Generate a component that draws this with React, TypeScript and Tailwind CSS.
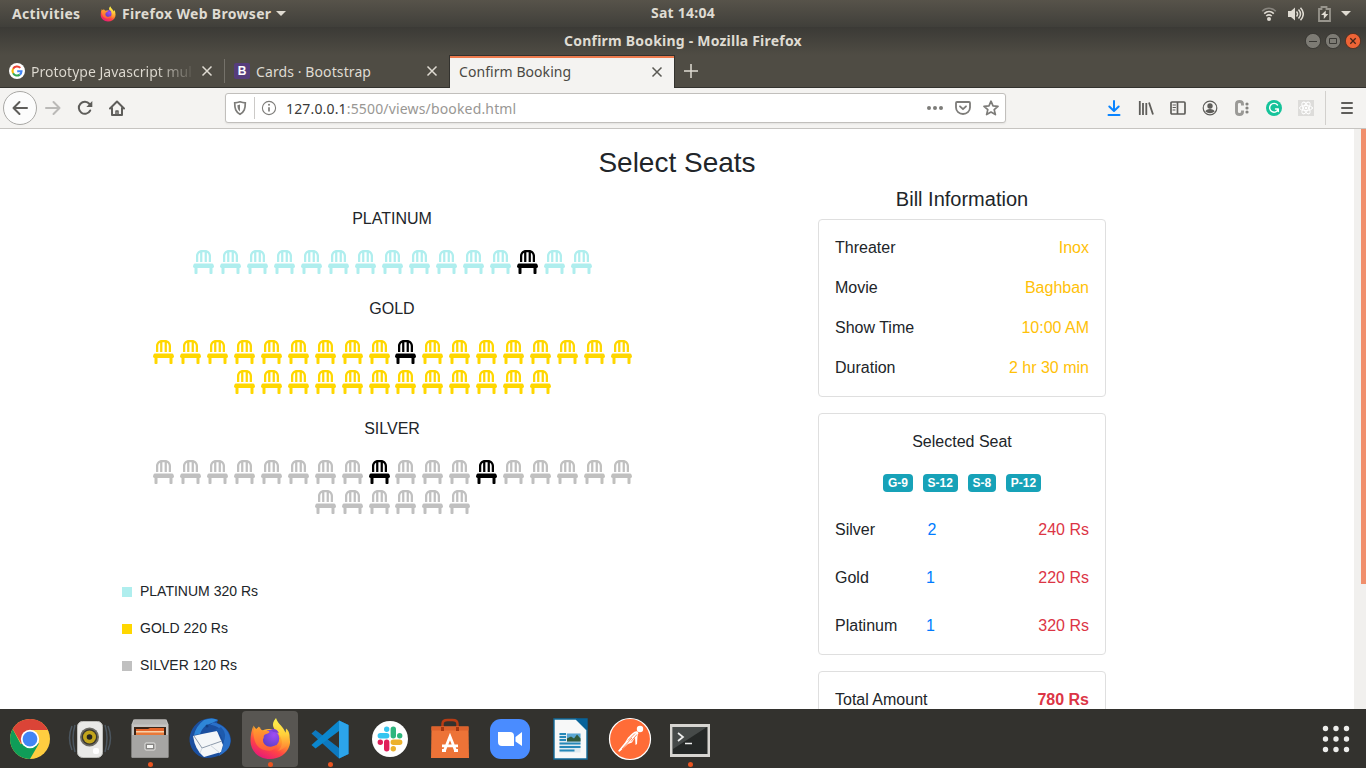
import type { ReactNode } from "react";
import { FaChair } from "react-icons/fa";

const chromeFont = "font-['Noto_Sans','Open_Sans',sans-serif]";

function FirefoxLogo({ id, className }: { id: string; className: string }) {
  return (
    <svg viewBox="0 0 48 48" className={className}>
      <defs>
        <linearGradient id={id + "a"} x1="0.85" y1="0.1" x2="0.3" y2="1">
          <stop offset="0" stopColor="#ffe03c" />
          <stop offset="0.35" stopColor="#ff9a2c" />
          <stop offset="0.65" stopColor="#ff4545" />
          <stop offset="1" stopColor="#e5187a" />
        </linearGradient>
        <radialGradient id={id + "b"} cx="0.7" cy="0.3" r="0.8">
          <stop offset="0" stopColor="#a04cf5" />
          <stop offset="1" stopColor="#5b3fc4" />
        </radialGradient>
        <linearGradient id={id + "c"} x1="0" y1="0" x2="0" y2="1">
          <stop offset="0" stopColor="#fff44f" />
          <stop offset="0.5" stopColor="#ffd03a" />
          <stop offset="1" stopColor="#ff7a35" />
        </linearGradient>
        <linearGradient id={id + "d"} x1="0" y1="0" x2="0" y2="1">
          <stop offset="0" stopColor="#ffa62b" />
          <stop offset="1" stopColor="#ff5a3c" />
        </linearGradient>
      </defs>
      <path d="M7.500 10.500c-.5 2 0 3.500.5 5.500l5-4.500c.4 2 1.500 3.500 3.500 4 5-2 12-2 17 1l5 0c5 4 6.500 9 5 14C41 39 33 44 24 44 13 44 4.500 36 4.500 26c0-6 1-11 3-15.500z" fill={`url(#${id}a)`} />
      <path d="M30 3c-6 7-2 11 2.500 16 5 6 4.500 12-.5 17 9-3 12.500-9 11.500-16-.3-3-1.500-5-3.500-6.500l-.5 5C38 11 32 10 30 3z" fill={`url(#${id}c)`} />
      <circle cx="24.500" cy="23.500" r="8.800" fill={`url(#${id}b)`} />
      <path d="M7.500 10.500c1 2 2.500 3.500 4.500 4 .3-1.200 1-2 2-2.500 0 2 1.500 3.300 4 4h4.500c1 .4 1.200 1.300.5 1.800-1.500 1-4 1.200-5 2.700-.6 1 .3 2-1 3.500-.5 5.500 4 8.500 9 7.500 2.500-.5 4-1.500 5.500-1.500-2 5-8 7-13 5-8-2-12-9-11-24.500z" fill={`url(#${id}d)`} />
      <path d="M24.500 15c3-2 7-1 8.500 3.500-2-1-3.500-1.500-5.500-1.500z" fill="#7a3fd8" />
    </svg>
  );
}

function GoogleLogo() {
  return (
    <svg viewBox="0 0 16 16" className="size-4 shrink-0" fill="none" strokeWidth="2.100">
      <circle cx="8" cy="8" r="8" fill="#fff" />
      <path d="M11.300 4.900A4.500 4.500 0 0 0 4.100 5.800" stroke="#ea4335" />
      <path d="M4.100 5.800a4.500 4.500 0 0 0 0 4.400" stroke="#fbbc05" />
      <path d="M4.100 10.200a4.500 4.500 0 0 0 6.700 1.400" stroke="#34a853" />
      <path d="M10.800 11.600A4.500 4.500 0 0 0 12.500 8.200H8.200" stroke="#4285f4" />
    </svg>
  );
}

function Cross({ className }: { className: string }) {
  return (
    <svg viewBox="0 0 12 12" className={"size-3 shrink-0 " + className} stroke="currentColor" strokeWidth="1.500">
      <path d="M1.500 1.500l9 9M10.500 1.500l-9 9" />
    </svg>
  );
}

function SystemBar() {
  return (
    <div className="grid h-[27px] grid-cols-[1fr_auto_1fr] items-center bg-linear-to-b from-[#57534a] to-[#403f3a] text-[14px] font-bold text-[#dfdbd2]">
      <div className="flex items-center">
        <span className="ml-3 w-[87px] tracking-[0.350px] whitespace-nowrap">Activities</span>
        <FirefoxLogo id="top" className="size-[18px]" />
        <span className="ml-[5px] tracking-[0.320px] whitespace-nowrap">Firefox Web Browser</span>
        <svg viewBox="0 0 10 6" className="ml-[5px] h-[6px] w-[10px] fill-[#dfdbd2]">
          <path d="M0 0h10L5 5z" />
        </svg>
      </div>
      <span className="relative -top-px tracking-[0.250px]">Sat 14:04</span>
      <div className="flex items-center justify-end pr-[15px]">
        <svg viewBox="0 0 16 16" className="mr-[11px] size-4" fill="none" stroke="#dfdbd2" strokeWidth="1.600">
          <path d="M1.200 5.200C5 1.300 11 1.300 14.800 5.200" stroke="#88857e" />
          <path d="M3.200 7.600c2.800-2.700 6.800-2.700 9.600 0M5.200 10c1.800-1.500 3.800-1.500 5.600 0" />
          <circle cx="8" cy="13" r="2" fill="#dfdbd2" stroke="none" />
        </svg>
        <svg viewBox="0 0 16 16" className="mr-[13px] size-4" fill="none" stroke="#dfdbd2" strokeWidth="1.500">
          <path d="M0 5h3l4-3.500v13L3 11H0z" fill="#dfdbd2" stroke="none" />
          <path d="M8.500 5.500c1.300 1.500 1.300 3.500 0 5M10.500 3.500c2.500 2.800 2.500 6.200 0 9M12.500 1.800c3.600 4 3.600 8.400 0 12.400" />
        </svg>
        <svg viewBox="0 0 14 16" className="mr-[10px] h-4 w-[14px]" fill="none">
          <path d="M4.500 3V1h5v2H13v12H2V3z" stroke="#98958d" strokeWidth="1.800" />
          <path d="M8.800 4.500L4 9h2.800v4L11.300 8H8.700z" fill="#dfdbd2" />
        </svg>
        <svg viewBox="0 0 10 6" className="h-[6px] w-[10px] fill-[#dfdbd2]">
          <path d="M0 0h10L5 5z" />
        </svg>
      </div>
    </div>
  );
}

function TitleBar() {
  return (
    <div className="grid h-[28px] grid-cols-[1fr_auto_1fr] items-center bg-linear-to-b from-[#3b3a36] to-[#4f4c44] text-[14px] font-bold text-[#dfdbd2]">
      <div />
      <span className="pb-px tracking-[0.210px]">Confirm Booking - Mozilla Firefox</span>
      <div className="flex justify-end gap-1 pr-[5px]">
        <svg viewBox="0 0 16 16" className="size-4">
          <circle cx="8" cy="8" r="7.600" fill="#7d7b74" stroke="#33322e" strokeWidth=".8" />
          <path d="M4 8.500h8" stroke="#3a3935" />
        </svg>
        <svg viewBox="0 0 16 16" className="size-4">
          <circle cx="8" cy="8" r="7.600" fill="#7d7b74" stroke="#33322e" strokeWidth=".8" />
          <path d="M4.500 5.500h7v5h-7z" stroke="#3a3935" fill="none" />
        </svg>
        <svg viewBox="0 0 16 16" className="size-4">
          <circle cx="8" cy="8" r="7.600" fill="#ee6436" stroke="#4a2c20" strokeWidth=".8" />
          <path d="M5.300 5.300l5.400 5.400M10.700 5.300l-5.400 5.400" stroke="#44251a" strokeWidth="1.300" />
        </svg>
      </div>
    </div>
  );
}

function TabStrip() {
  return (
    <div className="flex h-[33px] border-b border-[#33322e] bg-[#4f4c44] text-[14px] text-[#dfdbd2]">
      <div className="flex w-[225px] items-center pl-[9px]">
        <GoogleLogo />
        <div className="ml-[6px] w-[163px] bg-linear-to-r from-[#dfdbd2] from-77% to-[#57544c] bg-clip-text tracking-[0.020px] whitespace-nowrap text-transparent">Prototype Javascript mul</div>
        <Cross className="ml-[7px]" />
        <div className="ml-auto h-6 w-px bg-[#75726a]" />
      </div>
      <div className="flex w-[224px] items-center pr-[11px] pl-[9px]">
        <div className="flex size-4 shrink-0 items-center justify-center rounded-[2px] bg-[#563d7c] font-['Liberation_Sans',sans-serif] text-[12px] font-bold text-white">B</div>
        <span className="ml-[6px] tracking-[0.100px] whitespace-nowrap">Cards · Bootstrap</span>
        <Cross className="ml-auto" />
      </div>
      <div className="-mb-px flex w-[226px] items-center border-x border-t-[1px] border-[#33322e] bg-[#f4f3f1] pr-[11px] pl-[9px] text-[#4a4944] shadow-[inset_0_2px_0_#ee7b4e]">
        <span className="pb-[2px] tracking-[0.060px]">Confirm Booking</span>
        <Cross className="ml-auto text-[#5a5954]" />
      </div>
      <svg viewBox="0 0 14 14" className="mt-[9px] ml-[9px] size-[14px]" stroke="#dfdbd2" strokeWidth="1.500">
        <path d="M7 0v14M0 7h14" />
      </svg>
    </div>
  );
}

function Tool({ children }: { children: ReactNode }) {
  return (
    <div className="flex w-8 items-center justify-center">
      <svg viewBox="0 0 16 16" className="size-4" fill="none" stroke="#5e5d5a" strokeWidth="2" strokeLinecap="round" strokeLinejoin="round">
        {children}
      </svg>
    </div>
  );
}

function Toolbar() {
  return (
    <div className="flex h-[41px] items-stretch border-b border-[#c6c4c1] bg-[#f4f3f1]">
      <div className="flex w-[225px] items-stretch pl-[3px]">
        <div className="mt-[3px] flex size-[34px] items-center justify-center rounded-full border border-[#a9a8a5] bg-[#fcfcfc]">
          <svg viewBox="0 0 16 16" className="size-4" fill="none" stroke="#5e5d5a" strokeWidth="2" strokeLinecap="round" strokeLinejoin="round">
            <path d="M15 8H1.500M7.500 2l-6 6 6 6" />
          </svg>
        </div>
        <Tool>
          <path d="M1 8h13.500M8.500 2l6 6-6 6" stroke="#bab9b7" />
        </Tool>
        <Tool>
          <path d="M13.200 10.500A6 6 0 1 1 12.500 4" />
          <path d="M15.300 1v6H9.300z" fill="#5e5d5a" stroke="none" />
        </Tool>
        <Tool>
          <path d="M1 8.500L8 1.500l7 7M3 8v7h10V8" />
          <path d="M7 15v-4h2v4" strokeWidth="1.500" />
        </Tool>
      </div>
      <div className="mt-[5px] flex h-[30px] w-[781px] items-center rounded-[3px] border border-[#c1bfbc] bg-white shadow-[0_1px_2px_#00000012]">
        <svg viewBox="0 0 16 16" className="ml-[6px] size-4" fill="none" stroke="#7d7c79">
          <path d="M8 1.800c2 .7 3.800 1 5.300 1 0 6-1 9-5.300 11.500C3.700 11.800 2.700 8.800 2.700 2.800c1.500 0 3.300-.3 5.300-1z" strokeWidth="1.700" />
          <path d="M8 4.500v7C6 10 5.500 8 5.400 5.200z" fill="#7d7c79" stroke="none" />
        </svg>
        <div className="ml-[6px] h-[22px] w-px bg-[#cccac8]" />
        <svg viewBox="0 0 16 16" className="ml-[6px] size-4" fill="none" stroke="#7d7c79">
          <circle cx="8" cy="8" r="6.600" strokeWidth="1.100" />
          <path d="M8 7.200v4.300" strokeWidth="1.700" />
          <circle cx="8" cy="4.800" r="1" fill="#7d7c79" stroke="none" />
        </svg>
        <span className="ml-[9px] text-[14px] tracking-[0.160px] text-[#999794]">
          <span className="text-[#3a3a38]">127.0.0.1</span>:5500/views/booked.html
        </span>
        <svg viewBox="0 0 16 16" className="ml-auto size-4 fill-[#7d7c79]">
          <circle cx="2" cy="8" r="2" />
          <circle cx="8" cy="8" r="2" />
          <circle cx="14" cy="8" r="2" />
        </svg>
        <svg viewBox="0 0 16 16" className="ml-3 size-4" fill="none" stroke="#7d7c79" strokeWidth="1.800" strokeLinecap="round" strokeLinejoin="round">
          <path d="M2 2h12q1 0 1 1v4.500a7 6.500 0 0 1-14 0V3q0-1 1-1z" />
          <path d="M5 6.300l3 2.900 3-2.900" />
        </svg>
        <svg viewBox="0 0 16 16" className="mr-[6px] ml-3 size-4" fill="none" stroke="#7d7c79" strokeWidth="1.700" strokeLinejoin="round">
          <path d="M8 1.200l2 4.600 5 .5-3.800 3.300 1.200 5L8 12l-4.400 2.600 1.200-5L1 6.300l5-.5z" />
        </svg>
      </div>
      <div className="ml-[92px] flex">
        <Tool>
          <path d="M8 1v9.500M3.300 6.500L8 11l4.700-4.500M2.500 15h11" stroke="#0a84ff" />
        </Tool>
        <Tool>
          <path d="M1.800 1v14M5 3v12M8.300 3v12M11 2.500l4 12" strokeWidth="1.800" strokeLinecap="butt" />
        </Tool>
        <Tool>
          <path d="M2 2h12q1 0 1 1v10q0 1-1 1H2q-1 0-1-1V3q0-1 1-1zM7.500 2v12" strokeWidth="1.700" />
          <path d="M3 5h2.500M3 7.500h2.500M3 10h2" strokeWidth="1" />
        </Tool>
        <Tool>
          <circle cx="8" cy="8" r="6.800" strokeWidth="1.200" />
          <circle cx="8" cy="6" r="2.700" fill="#5e5d5a" stroke="none" />
          <path d="M3.300 11.500q1-2.500 4.700-2.500t4.700 2.500Q10.500 13.300 8 13.300t-4.700-1.800z" fill="#5e5d5a" stroke="none" />
        </Tool>
        <Tool>
          <path d="M8.500 5.500V4Q8.500 1.500 5.500 1.500T2.500 4v8q0 2.500 3 2.500T8.500 12v-1.500" stroke="#9a9996" strokeWidth="2.900" strokeLinecap="butt" />
          <path d="M13 4v.01M13 8v.01M13 12v.01" stroke="#858481" strokeWidth="3.200" />
        </Tool>
        <Tool>
          <circle cx="8" cy="8" r="8" fill="#15c39a" stroke="none" />
          <path d="M11.500 5A4.400 4.400 0 1 0 12.300 9H9.500M12.300 9v2.500" stroke="#fff" strokeWidth="1.400" />
        </Tool>
        <Tool>
          <path d="M0 0h16v16H0z" fill="#dddcda" stroke="none" />
          <g stroke="#fff" strokeWidth="1">
            <ellipse cx="8" cy="8" rx="6.500" ry="2.600" />
            <ellipse cx="8" cy="8" rx="6.500" ry="2.600" transform="rotate(60 8 8)" />
            <ellipse cx="8" cy="8" rx="6.500" ry="2.600" transform="rotate(120 8 8)" />
          </g>
          <circle cx="8" cy="8" r="1.300" fill="#fff" stroke="none" />
        </Tool>
      </div>
      <div className="mt-[3px] ml-[3px] h-[34px] w-px bg-[#d2d0cd]" />
      <div className="ml-[5px] flex">
        <Tool>
          <path d="M3 3h10M3 8h10M3 13h10" />
        </Tool>
      </div>
    </div>
  );
}

function SeatRow({ count, taken, color }: { count: number; taken: number[]; color: string }) {
  return (
    <div className="flex h-[30px] items-start justify-center gap-[5.940px] pl-px">
      {Array.from({ length: count }, (_, i) => (
        <FaChair key={i} className={"h-6 w-[21px] shrink-0 " + (taken.includes(i) ? "text-black" : color)} />
      ))}
    </div>
  );
}

function Section({ name, children }: { name: string; children: ReactNode }) {
  return (
    <section className="mb-[17px]">
      <h4 className="mb-[19px] text-center text-base leading-6">{name}</h4>
      {children}
    </section>
  );
}

const legend = [
  ["bg-[#afeeee]", "PLATINUM 320 Rs"],
  ["bg-[#ffd700]", "GOLD 220 Rs"],
  ["bg-[#c0c0c0]", "SILVER 120 Rs"],
];

const show = [
  ["Threater", "Inox"],
  ["Movie", "Baghban"],
  ["Show Time", "10:00 AM"],
  ["Duration", "2 hr 30 min"],
];

const bill = [
  ["Silver", "w-[92.500px]", "2", "240 Rs"],
  ["Gold", "w-[91px]", "1", "220 Rs"],
  ["Platinum", "w-[91px]", "1", "320 Rs"],
];

function Page() {
  return (
    <div className="flex h-[580px] overflow-hidden bg-white font-['Liberation_Sans',Arial,sans-serif] text-[#212529]">
      <main className="w-[1354px] px-[107px] pt-[17px]">
        <h1 className="h-[41px] text-center text-[28px] leading-[34px]">Select Seats</h1>
        <div className="grid grid-cols-2">
          <div className="px-[15px] pt-5">
            <Section name="PLATINUM">
              <SeatRow count={15} taken={[12]} color="text-[#afeeee]" />
            </Section>
            <Section name="GOLD">
              <SeatRow count={18} taken={[9]} color="text-[#ffd700]" />
              <SeatRow count={12} taken={[]} color="text-[#ffd700]" />
            </Section>
            <Section name="SILVER">
              <SeatRow count={18} taken={[8, 12]} color="text-[#c0c0c0]" />
              <SeatRow count={6} taken={[]} color="text-[#c0c0c0]" />
            </Section>
            <ul className="mt-[61px] flex flex-col gap-4 text-[14px] leading-[21px]">
              {legend.map(([swatch, text]) => (
                <li key={text} className="flex items-center gap-2">
                  <span className={"size-[10px] " + swatch} />
                  {text}
                </li>
              ))}
            </ul>
          </div>
          <div className="flex flex-col items-center">
            <h2 className="h-8 text-[20px] leading-6">Bill Information</h2>
            <div className="mb-4 w-72 rounded border border-[#dfdfdf] px-4 pt-4">
              {show.map(([label, value]) => (
                <div key={label} className="mb-4 flex justify-between leading-6">
                  <span>{label}</span>
                  <span className="text-[#ffc107]">{value}</span>
                </div>
              ))}
            </div>
            <div className="mb-4 w-72 rounded border border-[#dfdfdf] px-4 pt-4">
              <div className="mb-5 text-center leading-6">Selected Seat</div>
              <div className="mb-[26px] flex justify-center gap-[10px]">
                {["G-9", "S-12", "S-8", "P-12"].map((seat) => (
                  <span key={seat} className="rounded bg-[#17a2b8] px-[4.800px] py-[3px] text-[12px] leading-3 font-bold text-white">{seat}</span>
                ))}
              </div>
              <div className="flex flex-col gap-6 pb-4">
                {bill.map(([label, width, count, price]) => (
                  <div key={label} className="flex leading-6">
                    <span className={width}>{label}</span>
                    <span className="flex-1 text-[#007bff]">{count}</span>
                    <span className="text-[#dc3545]">{price}</span>
                  </div>
                ))}
              </div>
            </div>
            <div className="flex h-20 w-72 justify-between rounded border border-[#dfdfdf] p-4 leading-6">
              <span>Total Amount</span>
              <span className="font-bold text-[#dc3545]">780 Rs</span>
            </div>
          </div>
        </div>
      </main>
      <div className="flex h-full w-3 justify-end bg-[#f1f0ee]">
        <div className="h-[455px] w-[5px] bg-[#f08f6c]" />
      </div>
    </div>
  );
}

const dockIcons: { name: string; running?: boolean; active?: boolean; art: ReactNode }[] = [
  {
    name: "Chrome",
    art: (
      <>
        <circle cx="24" cy="24" r="20" fill="#ffcd40" />
        <path d="M24 24L14.800 29.300 6.700 14A20 20 0 0 0 24 44l9-15.500z" fill="#0f9d58" />
        <path d="M24 15h17.900A20 20 0 0 0 6.700 14l8.800 15z" fill="#db4437" />
        <circle cx="24" cy="24" r="9.200" fill="#fff" />
        <circle cx="24" cy="24" r="7.400" fill="#4285f4" />
      </>
    ),
  },
  {
    name: "Rhythmbox",
    art: (
      <>
        <g fill="none" stroke="#5d7082" strokeWidth="1.500" opacity=".6">
          <path d="M9 10q-4 13 0 27M6 11q-5 12 0 24M39 10q4 13 0 27M42 11q5 12 0 24" />
        </g>
        <rect x="11.500" y="6.500" width="25" height="36" rx="5" fill="#e9e9e7" stroke="#bdbdba" />
        <circle cx="23.500" cy="22" r="9.500" fill="#6d6c66" />
        <circle cx="23.500" cy="22" r="7.800" fill="#39372f" />
        <circle cx="23.500" cy="22" r="6.500" fill="#c2a51c" />
        <circle cx="23.500" cy="22" r="2.800" fill="#26251f" />
        <rect x="27" y="33" width="6" height="6" rx="2" fill="#fff" />
      </>
    ),
  },
  {
    name: "Files",
    running: true,
    art: (
      <>
        <path d="M7.500 4.500h33l2 5v33h-37v-33z" fill="#c5c4c2" />
        <path d="M8.500 4.500h31l2 5h-35z" fill="#b5b4b2" />
        <path d="M8 12h32v8H8z" fill="#3b2417" />
        <path d="M10 14h12l2-1h14v6H10z" fill="#e5652a" />
        <path d="M10 16h28v3H10z" fill="#f7d0a9" />
        <path d="M10 17.500h28V20H10z" fill="#e87838" />
        <path d="M6 20h36v22.500H6z" fill="#a6a5a3" />
        <rect x="19" y="28" width="10" height="7" rx="1" fill="#858482" stroke="#e5e4e2" />
        <path d="M21 30h6v3h-6z" fill="#f6f6f4" />
      </>
    ),
  },
  {
    name: "Thunderbird",
    art: (
      <>
        <path d="M20 43C9 42 3 32 3.500 23 4.500 14 11 6 18 4.500c5-2 11-1.500 14 .5l-1 3c9 3 14 10 14 18-1 10-11 17-25 17z" fill="#1b4f9f" />
        <path d="M30 8c11 4 16 13 14 21-1 5-5 8-11 12 5-8 6-18 3-24-3-5-7-7-12-7 3-3 4-3 6-2z" fill="#2a70c8" />
        <path d="M8 20q2-9 10-15 8-3 14 0l-6 3q-9 2-12 11z" fill="#2e86d8" />
        <path d="M7 21l9-2 15-3 6 14-2 7-17 5Q9 35 7 21z" fill="#f4f6f8" />
        <path d="M8 21l8 12 20-7" fill="none" stroke="#8d9aab" />
        <path d="M16 33l-2 5M24 30l10 8" fill="none" stroke="#cfd6df" />
        <path d="M29 15q8 4 8 13 5-9-2-16z" fill="#1d5aad" />
        <circle cx="21" cy="11" r="1.500" fill="#123e83" />
      </>
    ),
  },
  { name: "Firefox", running: true, active: true, art: null },
  {
    name: "Code",
    running: true,
    art: (
      <>
        <path d="M33 5.500L42.500 10v29L33 43.500 5.500 18.500l4-3.500L33 33z" fill="#0d79bf" />
        <path d="M33 5.500v10.500L9.500 33.500l-4-3.500z" fill="#0b87ce" />
        <path d="M33 5.500L42.500 10v29L33 43.500z" fill="#2ca4ea" />
      </>
    ),
  },
  {
    name: "Slack",
    art: (
      <>
        <circle cx="24" cy="24" r="18" fill="#fff" />
        <g strokeWidth="5.400" strokeLinecap="round">
          <path d="M20.700 14.300v.01M14.300 20.700h6.400" stroke="#36c5f0" />
          <path d="M33.700 20.700v.01M27.300 14.300v6.400" stroke="#2eb67d" />
          <path d="M27.300 33.700v.01M27.300 27.300h6.400" stroke="#ecb22e" />
          <path d="M14.300 27.300v.01M20.700 27.300v6.400" stroke="#e01e5a" />
        </g>
      </>
    ),
  },
  {
    name: "Software",
    art: (
      <>
        <path d="M16.500 17v-8q0-4 5-4h5q5 0 5 4v8" fill="none" stroke="#b83c14" strokeWidth="2.500" />
        <path d="M5.500 11.500h37l.5 31.500H5z" fill="#ed7337" />
        <path d="M5.500 11.500h37v4h-37z" fill="#de622c" />
        <path d="M16.500 16v-4M31.500 16v-4" stroke="#a43712" strokeWidth="3" />
        <path d="M18.500 35.500l5.500-14 5.500 14M16 30.800h16M16 35.500h4M28 35.500h4" fill="none" stroke="#fff" strokeWidth="2.800" />
      </>
    ),
  },
  {
    name: "Zoom",
    art: (
      <>
        <rect x="4" y="4" width="40" height="40" rx="11" fill="#4a8cff" />
        <path d="M12 17h12q4 0 4 4v10H16q-4 0-4-4zM29.500 22l6.500-5v14l-6.500-4.500z" fill="#fff" />
      </>
    ),
  },
  {
    name: "Writer",
    art: (
      <>
        <path d="M8 4h22l11 11v29H8z" fill="#f7f8f8" stroke="#106a9a" strokeWidth="1.400" />
        <path d="M29 3.300h12.700V15z" fill="#07639b" />
        <path d="M13.500 18.500h21v19h-21z" fill="#deeaf0" />
        <path d="M13.500 19H20M13.500 22H20M13.500 25H20M13.500 28.500h21M13.500 32h21M13.500 35.500h15" stroke="#2688b8" strokeWidth="1.800" />
        <path d="M21 18.500h13.500v8H21z" fill="#5aa7d4" />
        <path d="M21 26.500v-3l4-2 3 2 3-4 3.500 4v3z" fill="#315a3b" />
      </>
    ),
  },
  {
    name: "Postman",
    art: (
      <>
        <circle cx="24" cy="24" r="20.500" fill="#ff6c37" stroke="#fff" strokeWidth="1.200" />
        <circle cx="34" cy="14" r="3.200" fill="#fff" />
        <path d="M31.500 16.500c-3-1-6 3-9.500 6l-3 5-7 8.500 1.500.8L22 29l4-1.500 3-5 .5 7.500 1.500-1 .5-8 1-3z" fill="#fff" />
        <path d="M29 18.500l-7 7M31 19.500l-6 7M26 23l-10 11" fill="none" stroke="#ff6c37" strokeWidth=".8" />
      </>
    ),
  },
  {
    name: "Terminal",
    running: true,
    art: (
      <>
        <path d="M4 9h40v33H4z" fill="#d7d5d1" />
        <path d="M6.500 12h35v27h-35z" fill="#252827" />
        <path d="M7 12h34L7 34z" fill="#464a49" />
        <path d="M12 18l5 4-5 4M19 28.500h7" fill="none" stroke="#eee" strokeWidth="1.700" />
      </>
    ),
  },
];

function Dock() {
  return (
    <div className="flex h-[59px] items-start bg-[#33322e] pt-[2px]">
      {dockIcons.map((icon) => (
        <div key={icon.name} className="flex w-[60px] justify-center">
          <div className={"relative flex size-14 items-center justify-center rounded " + (icon.active ? "bg-[#585652]" : "")}>
            {icon.active ? (
              <FirefoxLogo id="dock" className="size-12" />
            ) : (
              <svg viewBox="0 0 48 48" className="size-12">
                {icon.art}
              </svg>
            )}
            {icon.running && <span className="absolute bottom-0 left-[25.500px] size-[5px] rounded-full bg-[#e95420]" />}
          </div>
        </div>
      ))}
      <svg viewBox="0 0 28 28" className="mt-[14px] mr-4 ml-auto size-7 fill-[#eeeeec]">
        {[3.500, 14, 24.500].map((y) => [3.500, 14, 24.500].map((x) => <circle key={x + "-" + y} cx={x} cy={y} r="2.700" />))}
      </svg>
    </div>
  );
}

export default function App() {
  return (
    <div className={"h-[768px] w-[1366px] overflow-hidden " + chromeFont}>
      <SystemBar />
      <TitleBar />
      <TabStrip />
      <Toolbar />
      <Page />
      <Dock />
    </div>
  );
}
